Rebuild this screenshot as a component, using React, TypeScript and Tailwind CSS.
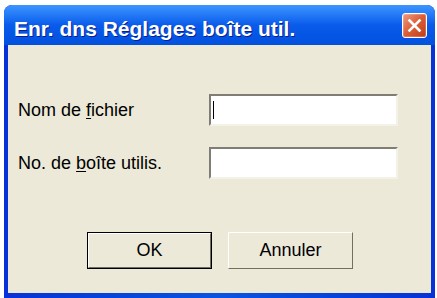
import React from 'react';

const uiFont = { fontFamily: '"Liberation Sans", Arial, sans-serif' };

const CloseButton = () => (
  <div className="w-[25px] h-[25px] rounded-[3px] border border-white bg-gradient-to-br from-[#EE9A7E] via-[#DA5D37] to-[#C03A16] flex items-center justify-center shadow-[inset_0_0_0_1px_rgba(255,255,255,0.2)]">
    <svg width="15" height="15" viewBox="0 0 15 15">
      <path d="M2.5 2.5 L12.5 12.5 M12.5 2.5 L2.5 12.5" stroke="white" strokeWidth="2.6" strokeLinecap="square" />
    </svg>
  </div>
);

const Field = ({ caret }: { caret?: boolean }) => (
  <div className="w-[189px] h-[32px] bg-white border-t-2 border-l-2 border-t-[#7F7D74] border-l-[#7F7D74] border-b-2 border-r-2 border-b-[#F4F2E8] border-r-[#F4F2E8] flex items-center pl-[2px]">
    {caret && <div className="w-[1px] h-[18px] bg-black" />}
  </div>
);

const Button = ({ label, isDefault }: { label: string; isDefault?: boolean }) => (
  <div className={`w-[125px] h-[37px] ${isDefault ? 'border border-black' : ''}`}>
    <div className="w-full h-full bg-[#ECE9D8] border border-t-white border-l-white border-b-[#716F64] border-r-[#716F64] flex items-center justify-center text-[18px] text-black">
      {label}
    </div>
  </div>
);

export default function App() {
  return (
    <div className="w-[437px] h-[298px] bg-white pt-[5px] pl-[4px]" style={uiFont}>
      <div className="w-[431px] h-[293px] rounded-t-[8px] bg-gradient-to-r from-[#0831D9] via-[#0A54E4] to-[#0831D9] flex flex-col overflow-hidden">
        {/* Title bar */}
        <div className="h-[40px] flex items-center pl-[10px] pr-[8px] bg-gradient-to-b from-[#3D95FF] via-[#0A5BEB] to-[#0250DE]">
          <span className="flex-1 pt-[6px] text-white font-bold text-[21px] leading-none [text-shadow:1px_1px_0_#0A1E8C]">
            Enr. dns Réglages boîte util.
          </span>
          <CloseButton />
        </div>

        {/* Body */}
        <div className="flex-1 mx-[4px] mb-[5px] bg-[#ECE9D8] pl-[10px] pt-[49px] flex flex-col">
          <div className="flex items-center h-[32px]">
            <span className="w-[191px] text-[18px] text-black">
              Nom de <span className="underline underline-offset-2">f</span>ichier
            </span>
            <Field caret />
          </div>
          <div className="flex items-center h-[32px] mt-[21px]">
            <span className="w-[191px] text-[18px] text-black">
              No. de <span className="underline underline-offset-2">b</span>oîte utilis.
            </span>
            <Field />
          </div>
          <div className="flex gap-[16px] ml-[69px] mt-[53px]">
            <Button label="OK" isDefault />
            <Button label="Annuler" />
          </div>
        </div>
      </div>
    </div>
  );
}
